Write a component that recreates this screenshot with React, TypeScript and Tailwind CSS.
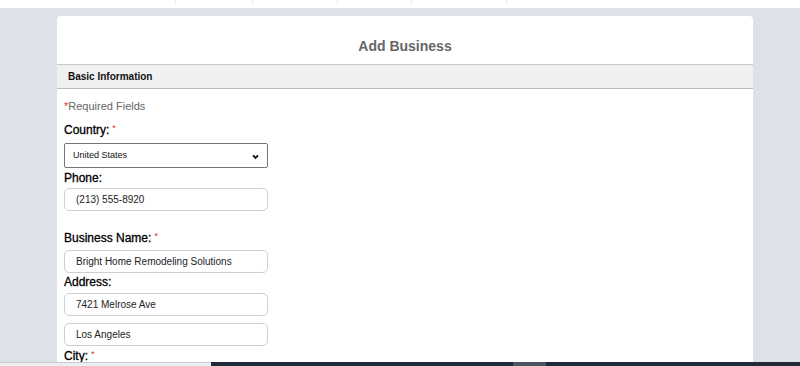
import type { ReactNode } from "react";

const font = { fontFamily: '"Liberation Sans", Arial, sans-serif' };

const TOP_COLS = [176, 77, 85, 74, 95];

function Req() {
  return <span className="relative -top-[3px] ml-[3px] text-[9px] text-[#e0302a] [-webkit-text-stroke:0px]">*</span>;
}

function Label({ children, required, className }: { children: ReactNode; required?: boolean; className?: string }) {
  return (
    <div className={`h-[14px] text-[12px] leading-[14px] text-black [-webkit-text-stroke:0.3px_#000] ${className ?? ""}`}>
      {children}
      {required && <Req />}
    </div>
  );
}

function TextInput({ value, className }: { value: string; className?: string }) {
  return (
    <div
      className={`flex h-[23px] w-[204px] items-center rounded-[5px] border border-[#cfcfcf] bg-white pl-[11px] text-[10px] text-[#222] ${className ?? ""}`}
    >
      {value}
    </div>
  );
}

export default function App() {
  return (
    <div className="min-h-screen bg-[#dee2e8]" style={font}>
      {/* cropped strip of the page above */}
      <div className="flex h-[8px] bg-white">
        {TOP_COLS.map((w, i) => (
          <div key={i} className="h-[5px] border-r border-[#ececec]" style={{ width: w }} />
        ))}
      </div>

      <div className="pt-[8px]">
        <div className="ml-[57px] w-[696px] rounded-t-[4px] bg-white pb-10">
          <div className="flex h-[49px] items-center justify-center border-b border-[#c9c9c9] pt-[12px] text-[14px] font-bold text-[#666]">
            Add Business
          </div>
          <div className="flex h-[24px] items-center border-b border-[#bdbdbd] bg-[#f0f0f0] pl-[11px] text-[10px] font-bold text-[#111]">
            Basic Information
          </div>

          <div className="pl-[7px]">
            <div className="mt-[11px] h-[13px] text-[11px] leading-[13px] text-[#666]">
              <span className="text-[#e0302a]">*</span>Required Fields
            </div>

            <Label required className="mt-[10px]">Country:</Label>
            <div className="relative mt-[6px] flex h-[25px] w-[204px] items-center rounded-[2px] border border-[#767676] bg-white pl-[8px] text-[9px] text-[#111]">
              United States
              <svg className="absolute right-[8px] top-[10px]" width="7" height="6" viewBox="0 0 7 6">
                <path d="M1 1.3 L3.5 3.8 L6 1.3" fill="none" stroke="#111" strokeWidth="1.9" />
              </svg>
            </div>

            <Label className="mt-[3px]">Phone:</Label>
            <TextInput value="(213) 555-8920" className="mt-[3px]" />

            <Label required className="mt-[20px]">Business Name:</Label>
            <TextInput value="Bright Home Remodeling Solutions" className="mt-[5px]" />

            <Label className="mt-[2px]">Address:</Label>
            <TextInput value="7421 Melrose Ave" className="mt-[4px]" />
            <TextInput value="Los Angeles" className="mt-[7px]" />

            <Label required className="mt-[3px]">City:</Label>
          </div>
        </div>
      </div>

      {/* bottom bar peeking in */}
      <div className="fixed inset-x-0 bottom-0 flex h-[4px]">
        <div className="w-[211px] border-t border-[#c8ccd0] bg-[#eceef1]" />
        <div className="w-[302px] bg-[#1e2c39]" />
        <div className="w-[33px] bg-[#4a5561]" />
        <div className="flex-1 bg-[#1e2c39]" />
      </div>
    </div>
  );
}
